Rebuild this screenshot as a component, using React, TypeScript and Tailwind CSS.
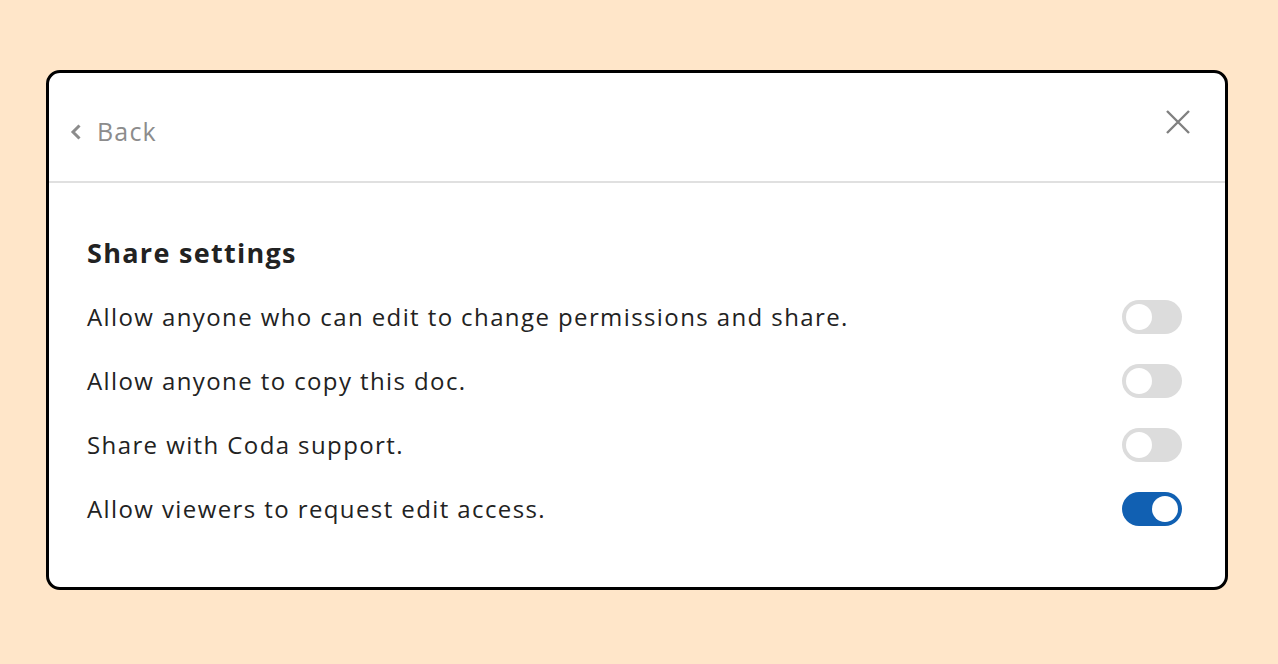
import { useState } from 'react';

const settings = [
  { label: 'Allow anyone who can edit to change permissions and share.', on: false },
  { label: 'Allow anyone to copy this doc.', on: false },
  { label: 'Share with Coda support.', on: false },
  { label: 'Allow viewers to request edit access.', on: true },
];

function Toggle({ on, onClick }: { on: boolean; onClick: () => void }) {
  return (
    <button
      onClick={onClick}
      className={`flex h-[34px] w-[60px] items-center rounded-full px-[4px] ${
        on ? 'justify-end bg-[#1160b2]' : 'justify-start bg-[#dcdcdc]'
      }`}
    >
      <span className="block h-[26px] w-[26px] rounded-full bg-white" />
    </button>
  );
}

export default function App() {
  const [values, setValues] = useState(settings.map(s => s.on));

  return (
    <div
      className="flex min-h-[664px] w-full bg-[#ffe6c9] pl-[46px] pr-[50px] pt-[70px]"
      style={{ fontFamily: '"Open Sans", "Noto Sans", sans-serif' }}
    >
      <div className="h-[520px] w-full rounded-[14px] border-[3px] border-black bg-white">
        <div className="flex h-[110px] items-start justify-between border-b-2 border-[#e0e0e0] pl-[21px] pr-[34px]">
          <button className="mt-[38px] flex h-[42px] items-center gap-[15px] text-[25px] tracking-[1.2px] text-[#8c8c8c]">
            <svg width="12" height="18" viewBox="0 0 12 18" fill="none">
              <path d="M9.5 2.5L3 9l6.5 6.5" stroke="#8c8c8c" strokeWidth="3" />
            </svg>
            <span>Back</span>
          </button>
          <button className="mt-[36px]">
            <svg width="26" height="26" viewBox="0 0 26 26" fill="none">
              <path d="M2 2l22 22M24 2L2 24" stroke="#808080" strokeWidth="2.4" />
            </svg>
          </button>
        </div>

        <div className="pl-[38px] pr-[43px] pt-[53px]">
          <h2 className="text-[27px] font-bold leading-[34px] tracking-[1.3px] text-[#222]">
            Share settings
          </h2>
          <div className="mt-[15px] flex flex-col">
            {settings.map((s, i) => (
              <div key={s.label} className="flex h-[64px] items-center justify-between">
                <span className="text-[24px] tracking-[1.4px] text-[#222]">{s.label}</span>
                <Toggle
                  on={values[i]}
                  onClick={() => setValues(prev => prev.map((v, j) => (j === i ? !v : v)))}
                />
              </div>
            ))}
          </div>
        </div>
      </div>
    </div>
  );
}
